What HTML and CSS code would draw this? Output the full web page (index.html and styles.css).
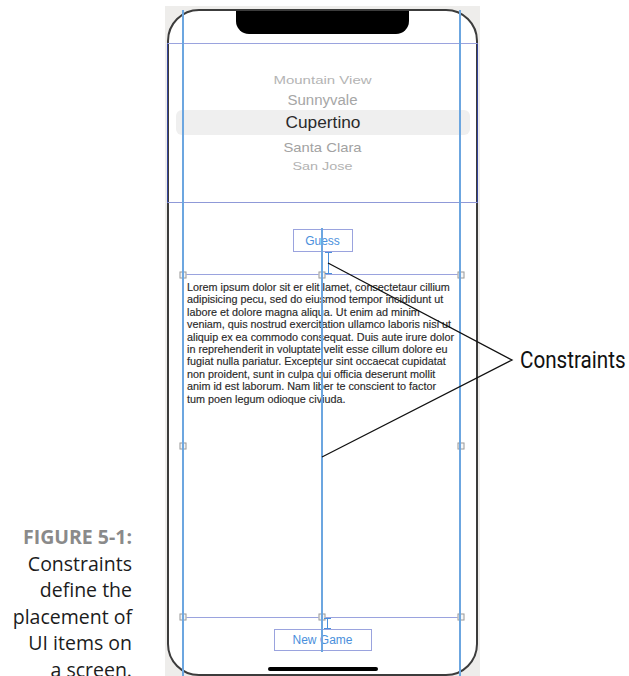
FILE: index.html
```html
<!DOCTYPE html>
<html lang="en">

<head>
    <meta charset="UTF-8">
    <meta name="viewport" content="width=device-width, initial-scale=1.0">
    <title>Figure 5-1: Constraints</title>
    <link rel="stylesheet" href="styles.css">
</head>

<body>

    <div class="page">
        <!-- Figure caption -->
        <p class="caption">
            <span class="fig-label">FIGURE 5-1:</span><br>
            Constraints<br>
            define the<br>
            placement of<br>
            UI items on<br>
            a screen.
        </p>

        <!-- Storyboard canvas with the phone -->
        <div class="canvas">
            <div class="phone">
                <div class="notch"></div>

                <div class="picker">
                    <div class="pick-row row-1"><span>Mountain View</span></div>
                    <div class="pick-row row-2"><span>Sunnyvale</span></div>
                    <div class="pick-row row-3"><span>Cupertino</span></div>
                    <div class="pick-row row-4"><span>Santa Clara</span></div>
                    <div class="pick-row row-5"><span>San Jose</span></div>
                </div>

                <div class="btn btn-guess">Guess</div>

                <div class="text-view">
                    <p class="lorem">
                        Lorem ipsum dolor sit er elit lamet, consectetaur cillium<br>
                        adipisicing pecu, sed do eiusmod tempor incididunt ut<br>
                        labore et dolore magna aliqua. Ut enim ad minim<br>
                        veniam, quis nostrud exercitation ullamco laboris nisi ut<br>
                        aliquip ex ea commodo consequat. Duis aute irure dolor<br>
                        in reprehenderit in voluptate velit esse cillum dolore eu<br>
                        fugiat nulla pariatur. Excepteur sint occaecat cupidatat<br>
                        non proident, sunt in culpa qui officia deserunt mollit<br>
                        anim id est laborum. Nam liber te conscient to factor<br>
                        tum poen legum odioque civiuda.
                    </p>
                    <span class="handle h-tl"></span>
                    <span class="handle h-tc"></span>
                    <span class="handle h-tr"></span>
                    <span class="handle h-ml"></span>
                    <span class="handle h-mr"></span>
                    <span class="handle h-bl"></span>
                    <span class="handle h-bc"></span>
                    <span class="handle h-br"></span>
                </div>

                <div class="btn btn-new">New Game</div>

                <div class="home-bar"></div>

                <!-- Layout guides and constraint markers -->
                <div class="guide guide-left"></div>
                <div class="guide guide-right"></div>
                <div class="guide guide-center"></div>
                <div class="ibeam ibeam-top"></div>
                <div class="ibeam ibeam-bottom"></div>
            </div>
        </div>

        <!-- Callout label -->
        <div class="callout">Constraints</div>

        <!-- Leader lines from the label to the constraints -->
        <svg class="leaders" width="629" height="676" viewBox="0 0 629 676">
            <polyline points="328,263 512,360 322,457" />
        </svg>
    </div>

</body>

</html>
```

FILE: styles.css
```css
/* Figure page */
body {
    margin: 0;
    background: #fff;
}

.page {
    position: relative;
    width: 629px;
    height: 676px;
    overflow: hidden;
    display: flex;
    align-items: flex-start;
}

/* Caption on the left */
.caption {
    flex-shrink: 0;
    width: 132px;
    margin: 0;
    padding-top: 524px;
    text-align: right;
    font-family: 'Open Sans', sans-serif;
    font-size: 19.5px;
    line-height: 26.5px;
    color: #1c1c1c;
}

.fig-label {
    font-weight: bold;
    color: #8a8a8a;
}

/* Gray storyboard canvas */
.canvas {
    flex-shrink: 0;
    box-sizing: border-box;
    width: 315px;
    height: 670px;
    margin: 6px 0 0 33px;
    padding: 3px 3px 0 2px;
    background: #eeedeb;
}

.phone {
    position: relative;
    box-sizing: border-box;
    width: 311px;
    height: 667px;
    border: 2px solid #3c3c3c;
    border-radius: 32px 32px 32px 32px;
    background: #fff;
    display: flex;
    flex-direction: column;
    align-items: center;
    font-family: 'Liberation Sans', Arial, sans-serif;
}

.notch {
    width: 173px;
    height: 23px;
    background: #000;
    border-radius: 0 0 13px 13px;
}

/* Picker view */
.picker {
    align-self: stretch;
    box-sizing: border-box;
    height: 160px;
    margin: 9px -2px 0;
    padding-top: 25px;
    border-top: 1px solid #9aa3de;
    border-bottom: 1px solid #8f99d8;
    border-left: 1px solid #34449a;
    border-right: 1px solid #34449a;
    display: flex;
    flex-direction: column;
}

.pick-row {
    display: flex;
    align-items: center;
    justify-content: center;
    white-space: nowrap;
}

.pick-row span {
    display: inline-block;
}

.row-1 {
    height: 20px;
    font-size: 15px;
    color: #b4b4b4;
}

.row-1 span {
    transform: scaleY(0.75);
}

.row-2 {
    height: 21px;
    font-size: 15px;
    color: #a6a6a6;
}

.row-2 span {
    transform: scaleY(0.92);
}

.row-3 {
    height: 25px;
    margin: 0 7px 0 8px;
    border-radius: 6px;
    background: #efefef;
    font-size: 17.3px;
    color: #2a2a2a;
}

.row-4 {
    height: 23px;
    font-size: 14.8px;
    color: #a2a2a2;
}

.row-4 span {
    transform: scaleY(0.92);
}

.row-5 {
    height: 16px;
    font-size: 14.4px;
    color: #b2b2b2;
}

.row-5 span {
    transform: scaleY(0.8);
}

/* Buttons */
.btn {
    box-sizing: border-box;
    display: flex;
    align-items: center;
    justify-content: center;
    border: 1px solid #9aa3de;
    font-size: 12px;
    color: #4a8fdc;
}

.btn-guess {
    width: 60px;
    height: 23px;
    margin-top: 26px;
}

.btn-new {
    width: 98px;
    height: 22px;
    margin-top: 11px;
}

/* Text view */
.text-view {
    position: relative;
    align-self: flex-start;
    box-sizing: border-box;
    width: 278px;
    height: 344px;
    margin: 22px 0 0 14px;
    border-top: 1px solid #9aa3de;
    border-bottom: 1px solid #9aa3de;
}

.lorem {
    margin: 0;
    padding: 6px 0 0 4px;
    white-space: nowrap;
    font-size: 10.8px;
    line-height: 12.4px;
    color: #2a2a2a;
    -webkit-text-stroke: 0.15px #2a2a2a;
}

.handle {
    position: absolute;
    box-sizing: border-box;
    width: 7px;
    height: 7px;
    border: 1px solid #9a9a9a;
    background: #f6f6f6;
    transform: translate(-50%, -50%);
}

.h-tl { left: 0; top: 0; }
.h-tc { left: 50%; top: 0; }
.h-tr { left: 100%; top: 0; }
.h-ml { left: 0; top: 50%; }
.h-mr { left: 100%; top: 50%; }
.h-bl { left: 0; top: 100%; }
.h-bc { left: 50%; top: 100%; }
.h-br { left: 100%; top: 100%; }

.home-bar {
    width: 110px;
    height: 4px;
    margin-top: 16px;
    border-radius: 2px;
    background: #000;
}

/* Guides */
.guide {
    position: absolute;
    width: 2px;
    background: #6ca6e0;
}

.guide-left {
    left: 13px;
    top: -1px;
    bottom: -20px;
}

.guide-right {
    left: 290px;
    top: -1px;
    bottom: -20px;
}

.guide-center {
    left: 152px;
    top: 217px;
    height: 424px;
}

.ibeam {
    position: absolute;
    box-sizing: border-box;
    width: 7px;
    border-top: 1px solid #4a8fdc;
    border-bottom: 1px solid #4a8fdc;
}

.ibeam::before {
    content: '';
    position: absolute;
    left: 3px;
    top: 0;
    bottom: 0;
    width: 1px;
    background: #4a8fdc;
}

.ibeam-top {
    left: 156px;
    top: 241px;
    height: 22px;
}

.ibeam-bottom {
    left: 155px;
    top: 607px;
    height: 11px;
}

/* Callout */
.callout {
    flex-shrink: 0;
    margin-left: 40px;
    padding-top: 348px;
    font-family: Roboto, sans-serif;
    font-size: 24px;
    line-height: 24px;
    color: #111;
    white-space: nowrap;
    transform: scaleX(0.86);
    transform-origin: left top;
}

.leaders {
    position: absolute;
    left: 0;
    top: 0;
    pointer-events: none;
}

.leaders polyline {
    fill: none;
    stroke: #111;
    stroke-width: 1.3;
}
```
